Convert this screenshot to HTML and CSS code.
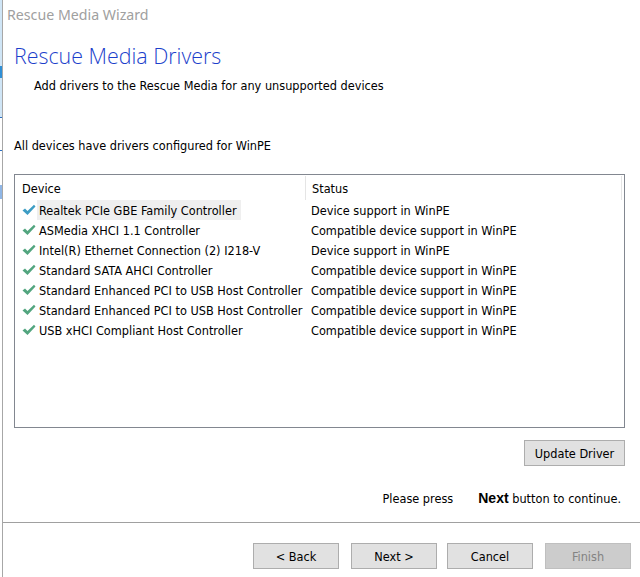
FILE: index.html
```html
<!DOCTYPE html>
<html>
<head>
<meta charset="utf-8">
<link rel="stylesheet" href="styles.css">
</head>
<body>
<div class="frame">
  <div class="edge">
    <div class="edge-top"><div class="edge-sel"></div></div>
    <div class="edge-tick t1"></div>
    <div class="edge-tick t2"></div>
    <div class="edge-t"></div>
  </div>
  <div class="main">
    <div class="titlebar">Rescue Media Wizard</div>
    <h1 class="heading">Rescue Media Drivers</h1>
    <p class="subtitle">Add drivers to the Rescue Media for any unsupported devices</p>
    <p class="info">All devices have drivers configured for WinPE</p>
    <div class="list">
      <div class="list-head">
        <div class="col-dev">Device</div>
        <div class="col-status">Status</div>
        <div class="col-rest"></div>
      </div>
      <div class="row selected">
        <div class="col-dev"><svg class="check blue" viewBox="0 0 14 12"><path d="M0.5 6.5 L3 4.5 L5.5 7 L12 0.8 L13.5 2.5 L5.5 11 Z"/></svg><span class="name">Realtek PCIe GBE Family Controller</span></div>
        <div class="col-status">Device support in WinPE</div>
      </div>
      <div class="row">
        <div class="col-dev"><svg class="check" viewBox="0 0 14 12"><path d="M0.5 6.5 L3 4.5 L5.5 7 L12 0.8 L13.5 2.5 L5.5 11 Z"/></svg><span class="name">ASMedia XHCI 1.1 Controller</span></div>
        <div class="col-status">Compatible device support in WinPE</div>
      </div>
      <div class="row">
        <div class="col-dev"><svg class="check" viewBox="0 0 14 12"><path d="M0.5 6.5 L3 4.5 L5.5 7 L12 0.8 L13.5 2.5 L5.5 11 Z"/></svg><span class="name">Intel(R) Ethernet Connection (2) I218-V</span></div>
        <div class="col-status">Device support in WinPE</div>
      </div>
      <div class="row">
        <div class="col-dev"><svg class="check" viewBox="0 0 14 12"><path d="M0.5 6.5 L3 4.5 L5.5 7 L12 0.8 L13.5 2.5 L5.5 11 Z"/></svg><span class="name">Standard SATA AHCI Controller</span></div>
        <div class="col-status">Compatible device support in WinPE</div>
      </div>
      <div class="row">
        <div class="col-dev"><svg class="check" viewBox="0 0 14 12"><path d="M0.5 6.5 L3 4.5 L5.5 7 L12 0.8 L13.5 2.5 L5.5 11 Z"/></svg><span class="name">Standard Enhanced PCI to USB Host Controller</span></div>
        <div class="col-status">Compatible device support in WinPE</div>
      </div>
      <div class="row">
        <div class="col-dev"><svg class="check" viewBox="0 0 14 12"><path d="M0.5 6.5 L3 4.5 L5.5 7 L12 0.8 L13.5 2.5 L5.5 11 Z"/></svg><span class="name">Standard Enhanced PCI to USB Host Controller</span></div>
        <div class="col-status">Compatible device support in WinPE</div>
      </div>
      <div class="row">
        <div class="col-dev"><svg class="check" viewBox="0 0 14 12"><path d="M0.5 6.5 L3 4.5 L5.5 7 L12 0.8 L13.5 2.5 L5.5 11 Z"/></svg><span class="name">USB xHCI Compliant Host Controller</span></div>
        <div class="col-status">Compatible device support in WinPE</div>
      </div>
    </div>
    <div class="update-row"><button class="btn update">Update Driver</button></div>
    <div class="hint"><span>Please press</span><span class="hint-next"><b>Next</b> button to continue.</span></div>
    <div class="separator"></div>
    <div class="nav">
      <button class="btn">&lt; Back</button>
      <button class="btn wide-gap">Next &gt;</button>
      <button class="btn">Cancel</button>
      <button class="btn wide-gap disabled">Finish</button>
    </div>
  </div>
</div>
</body>
</html>
```

FILE: styles.css
```css
html, body {
  margin: 0;
  padding: 0;
  background: #ffffff;
}
body {
  width: 640px;
  height: 577px;
  overflow: hidden;
  font-family: "DejaVu Sans Condensed", "DejaVu Sans", sans-serif;
  font-size: 12.6px;
  color: #000;
}
.frame {
  display: flex;
  height: 577px;
}
.edge {
  width: 2px;
  border-right: 1px solid #a7a7a7;
  display: flex;
  flex-direction: column;
}
.edge-top {
  height: 117px;
  background: #cfe5f6;
  padding-top: 66px;
  box-sizing: border-box;
}
.edge-sel {
  height: 12px;
  background: #2f8fd6;
}
.edge-tick {
  height: 1px;
  background: #2a6fc4;
}
.t2 { margin-top: 32px; }
.edge-t {
  margin-top: 34px;
  height: 14px;
  background: #8fb6e6;
}
.main {
  flex: 1;
  display: flex;
  flex-direction: column;
}
.titlebar {
  height: 30px;
  padding-left: 4px;
  line-height: 30px;
  font-family: "Noto Sans", "Open Sans", sans-serif;
  font-size: 14.2px;
  color: #a0a0a0;
}
.heading {
  margin: 11px 0 0 11px;
  font-family: "Open Sans", "Noto Sans", sans-serif;
  font-weight: 300;
  font-size: 21.4px;
  line-height: 30px;
  color: #1c3fcb;
}
.subtitle {
  margin: 6px 0 0 31px;
  line-height: 17px;
}
.info {
  margin: 43px 0 0 11px;
  line-height: 17px;
}
.list {
  margin: 20px 0 0 11px;
  padding-top: 1px;
  width: 609px;
  height: 251px;
  border: 1px solid #828790;
  box-sizing: content-box;
}
.list-head {
  display: flex;
  height: 24px;
  line-height: 25px;
}
.list-head .col-dev {
  padding-left: 7px;
  border-right: 1px solid #e5e5e5;
}
.list-head .col-status {
  padding-left: 6px;
  flex: 1;
  border-right: 1px solid #e5e5e5;
}
.list-head .col-rest {
  width: 2px;
}
.col-dev {
  width: 283px;
  flex: none;
}
.row {
  display: flex;
  height: 20px;
  line-height: 22px;
}
.row .col-dev {
  display: flex;
  align-items: stretch;
  padding-left: 7px;
}
.row .col-status {
  padding-left: 6px;
}
.check {
  width: 14px;
  height: 12px;
  flex: none;
  align-self: center;
  fill: #52a57f;
  margin-right: 1px;
}
.check.blue {
  fill: #3d9dc4;
}
.name {
  padding: 0 4px 0 2px;
  white-space: nowrap;
}
.selected .name {
  background: #efefef;
}
.update-row {
  display: flex;
  justify-content: flex-end;
  margin: 12px 15px 0 0;
}
.btn {
  width: 86px;
  height: 26px;
  padding: 0;
  border: 1px solid #adadad;
  background: #e1e1e1;
  font-family: "DejaVu Sans Condensed", "DejaVu Sans", sans-serif;
  font-size: 12.6px;
  color: #000;
}
.btn.update {
  width: 101px;
}
.btn.disabled {
  background: #cccccc;
  border-color: #bfbfbf;
  color: #838383;
}
.hint {
  display: flex;
  justify-content: flex-end;
  margin: 24px 19px 0 0;
  line-height: 17px;
}
.hint-next {
  margin-left: 25px;
}
.hint b {
  font-family: "Liberation Sans", sans-serif;
  font-size: 14px;
}
.separator {
  margin-top: 15px;
  height: 1px;
  background: #a0a0a0;
}
.nav {
  display: flex;
  justify-content: flex-end;
  margin: 20px 9px 0 0;
}
.nav .btn {
  margin-left: 10px;
}
.nav .btn.wide-gap {
  margin-left: 12px;
}
```
